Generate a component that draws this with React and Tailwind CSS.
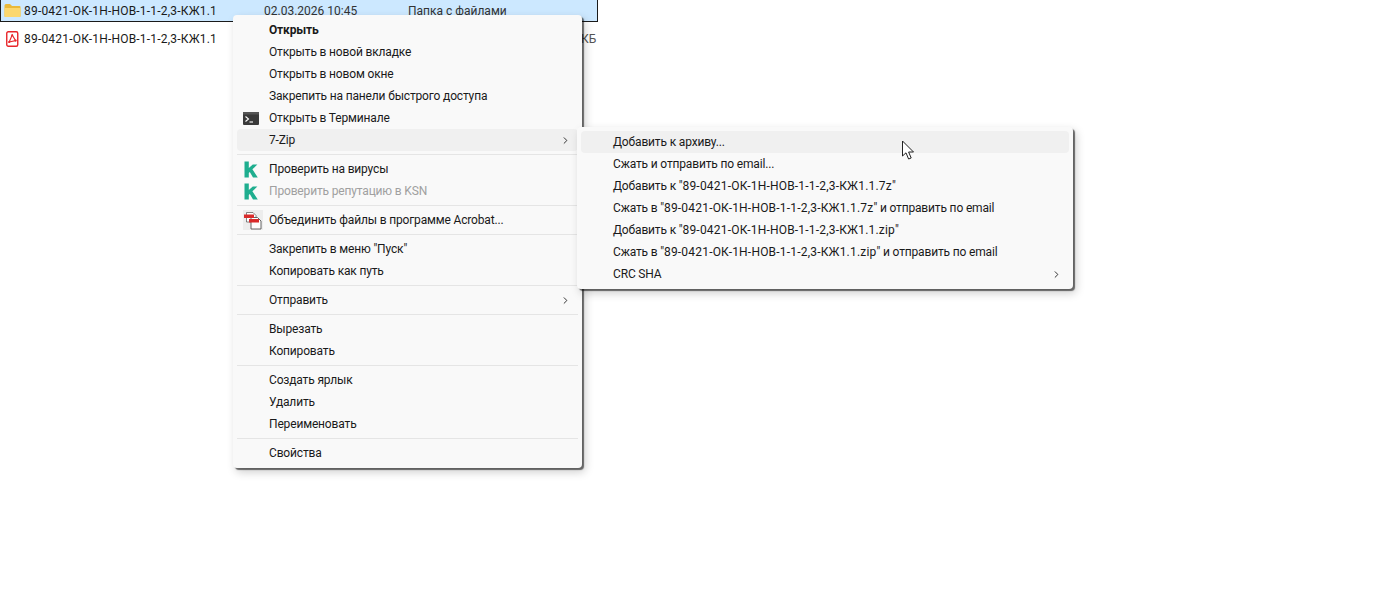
import React from 'react';
import { ChevronRight } from 'lucide-react';

const FONT = 'font-["Roboto","Open_Sans",sans-serif]';

function FolderIcon() {
  return (
    <svg width="17" height="15" viewBox="0 0 17 15" className="shrink-0">
      <path d="M0.5 2.5 Q0.5 1 2 1 H6 L8 3 H15.5 Q16.5 3 16.5 4 V13 Q16.5 14 15.5 14 H1.5 Q0.5 14 0.5 13 Z" fill="#e9b93a" />
      <path d="M0.5 5 H16.5 V13 Q16.5 14 15.5 14 H1.5 Q0.5 14 0.5 13 Z" fill="#fbd76e" />
    </svg>
  );
}

function PdfIcon() {
  return (
    <svg width="13" height="16" viewBox="0 0 13 16" className="shrink-0">
      <rect x="0.75" y="0.75" width="11" height="14.5" rx="1.5" fill="#fff" stroke="#e8262a" strokeWidth="1.4" />
      <path d="M6.2 4 L3.2 11 L9.6 9.6 Z" fill="none" stroke="#e8262a" strokeWidth="1.1" />
      <circle cx="6.2" cy="4.2" r="1" fill="#e8262a" />
      <circle cx="3.2" cy="11" r="1.1" fill="#e8262a" />
      <circle cx="9.6" cy="9.6" r="1.1" fill="#e8262a" />
    </svg>
  );
}

function TerminalIcon() {
  return (
    <svg width="16" height="13" viewBox="0 0 16 13">
      <rect width="16" height="13" rx="1" fill="#3a3a3a" />
      <rect width="16" height="2.5" fill="#555" />
      <path d="M2.5 4.5 L5.5 7 L2.5 9.5" fill="none" stroke="#fff" strokeWidth="1.1" />
      <path d="M6.5 10 H10" stroke="#fff" strokeWidth="1.1" />
    </svg>
  );
}

function KasperskyIcon() {
  return (
    <svg width="14" height="17" viewBox="0 0 14 17">
      <path d="M0.5 0.5 H4.8 V7 L8.8 3.6 H13.4 L8.4 8.2 L13.8 16.5 H9 L5.8 11 L4.8 12 V16.5 H0.5 Z" fill="#1fae8f" />
    </svg>
  );
}

function AcrobatIcon() {
  return (
    <svg width="20" height="20" viewBox="0 0 20 20" className="ml-1">
      <rect width="20" height="20" fill="#ededed" />
      <path d="M3.5 2.5 H10 L13 5.5 V12 H3.5 Z" fill="#fff" stroke="#666" strokeWidth="0.8" />
      <path d="M8 7.5 H14.5 L18 11 V19 H8 Z" fill="#fff" stroke="#555" strokeWidth="0.9" />
      <rect x="1" y="4.5" width="10" height="3.5" fill="#d92b2b" />
      <rect x="6" y="9" width="10" height="3.5" fill="#d92b2b" />
    </svg>
  );
}

function Separator() {
  return (
    <div className="h-[7px] flex items-center px-1">
      <div className="h-px w-full bg-[#e5e5e5]" />
    </div>
  );
}

// roboto digits run narrow next to the cyrillic, so the file name gets its own tracking
function Name({ children }) {
  return <span className="tracking-[0.2px]">{children}</span>;
}

function MenuItem({ label, icon, bold, disabled, hover, arrow }) {
  return (
    <div className={`relative h-[22px] mx-1 flex items-center rounded ${hover ? 'bg-[#f0f0f0]' : ''}`}>
      <div className="w-[32px] shrink-0 flex justify-center pr-[4px]">{icon}</div>
      <span className={`flex-1 text-[12px] tracking-[-0.16px] whitespace-nowrap ${bold ? 'font-bold' : ''} ${disabled ? 'text-[#a0a0a0]' : 'text-[#1a1a1a]'}`}>{label}</span>
      {arrow && <ChevronRight className="w-[11px] h-[11px] mr-[7px] text-[#222]" strokeWidth={2} />}
    </div>
  );
}

const FILE = '89-0421-ОК-1Н-НОВ-1-1-2,3-КЖ1.1';

const mainGroups = [
  [
    { id: 'open', label: 'Открыть', bold: true },
    { id: 'tab', label: 'Открыть в новой вкладке' },
    { id: 'win', label: 'Открыть в новом окне' },
    { id: 'pin', label: 'Закрепить на панели быстрого доступа' },
    { id: 'term', label: 'Открыть в Терминале', icon: <TerminalIcon /> },
    { id: 'zip', label: '7-Zip', hover: true, arrow: true },
  ],
  [
    { id: 'scan', label: 'Проверить на вирусы', icon: <KasperskyIcon /> },
    { id: 'ksn', label: 'Проверить репутацию в KSN', icon: <KasperskyIcon />, disabled: true },
  ],
  [{ id: 'acro', label: 'Объединить файлы в программе Acrobat...', icon: <AcrobatIcon /> }],
  [{ id: 'start', label: 'Закрепить в меню "Пуск"' }, { id: 'path', label: 'Копировать как путь' }],
  [{ id: 'send', label: 'Отправить', arrow: true }],
  [{ id: 'cut', label: 'Вырезать' }, { id: 'copy', label: 'Копировать' }],
  [{ id: 'link', label: 'Создать ярлык' }, { id: 'del', label: 'Удалить' }, { id: 'ren', label: 'Переименовать' }],
  [{ id: 'props', label: 'Свойства' }],
];

const zipItems = [
  { id: 'add', label: 'Добавить к архиву...', hover: true },
  { id: 'mail', label: 'Сжать и отправить по email...' },
  { id: 'add7z', label: <>Добавить к "<Name>{FILE}.7z</Name>"</> },
  { id: 'mail7z', label: <>Сжать в "<Name>{FILE}.7z</Name>" и отправить по email</> },
  { id: 'addzip', label: <>Добавить к "<Name>{FILE}.zip</Name>"</> },
  { id: 'mailzip', label: <>Сжать в "<Name>{FILE}.zip</Name>" и отправить по email</> },
  { id: 'crc', label: 'CRC SHA', arrow: true },
];

const menuClass =
  'absolute py-1 bg-[#f9f9f9] rounded-[4px] shadow-[2px_2px_1px_rgba(0,0,0,0.55),3px_4px_10px_rgba(0,0,0,0.2)]';

export default function App() {
  return (
    <div className={`relative h-[595px] bg-white overflow-hidden ${FONT}`}>
      <div className="h-[22px] w-[598px] flex items-center bg-[#cce8ff] border-l border-r border-b border-[#1a1a1a] text-[12px] text-[#1a1a1a]">
        <div className="w-[23px] flex justify-center"><FolderIcon /></div>
        <span className="w-[240px] whitespace-nowrap tracking-[0.2px]">{FILE}</span>
        <span className="w-[144px] text-[#333]">02.03.2026 10:45</span>
        <span className="text-[#333]">Папка с файлами</span>
      </div>
      <div className="h-[22px] mt-[6px] w-[599px] flex items-center text-[12px] text-[#1a1a1a]">
        <div className="w-[24px] flex justify-center"><PdfIcon /></div>
        <span className="w-[557px] whitespace-nowrap tracking-[0.2px]">{FILE}</span>
        <span className="text-[#555]">КБ</span>
      </div>

      <div className={`${menuClass} left-[233px] top-[15px] w-[349px]`}>
        {mainGroups.map((group, i) => (
          <div key={i}>
            {i > 0 && <Separator />}
            {group.map((item) => <MenuItem key={item.id} {...item} />)}
          </div>
        ))}
      </div>

      <div className={`${menuClass} left-[577px] top-[127px] w-[496px]`}>
        {zipItems.map((item) => <MenuItem key={item.id} {...item} />)}
      </div>

      {/* cursor */}
      <svg className="absolute left-[901px] top-[140px]" width="15" height="21" viewBox="0 0 15 21">
        <path d="M1.5 1 V16 L5 12.8 L7.6 19 L10.2 18 L7.6 12 H12.5 Z" fill="#fff" stroke="#222" strokeWidth="1" />
      </svg>
    </div>
  );
}
